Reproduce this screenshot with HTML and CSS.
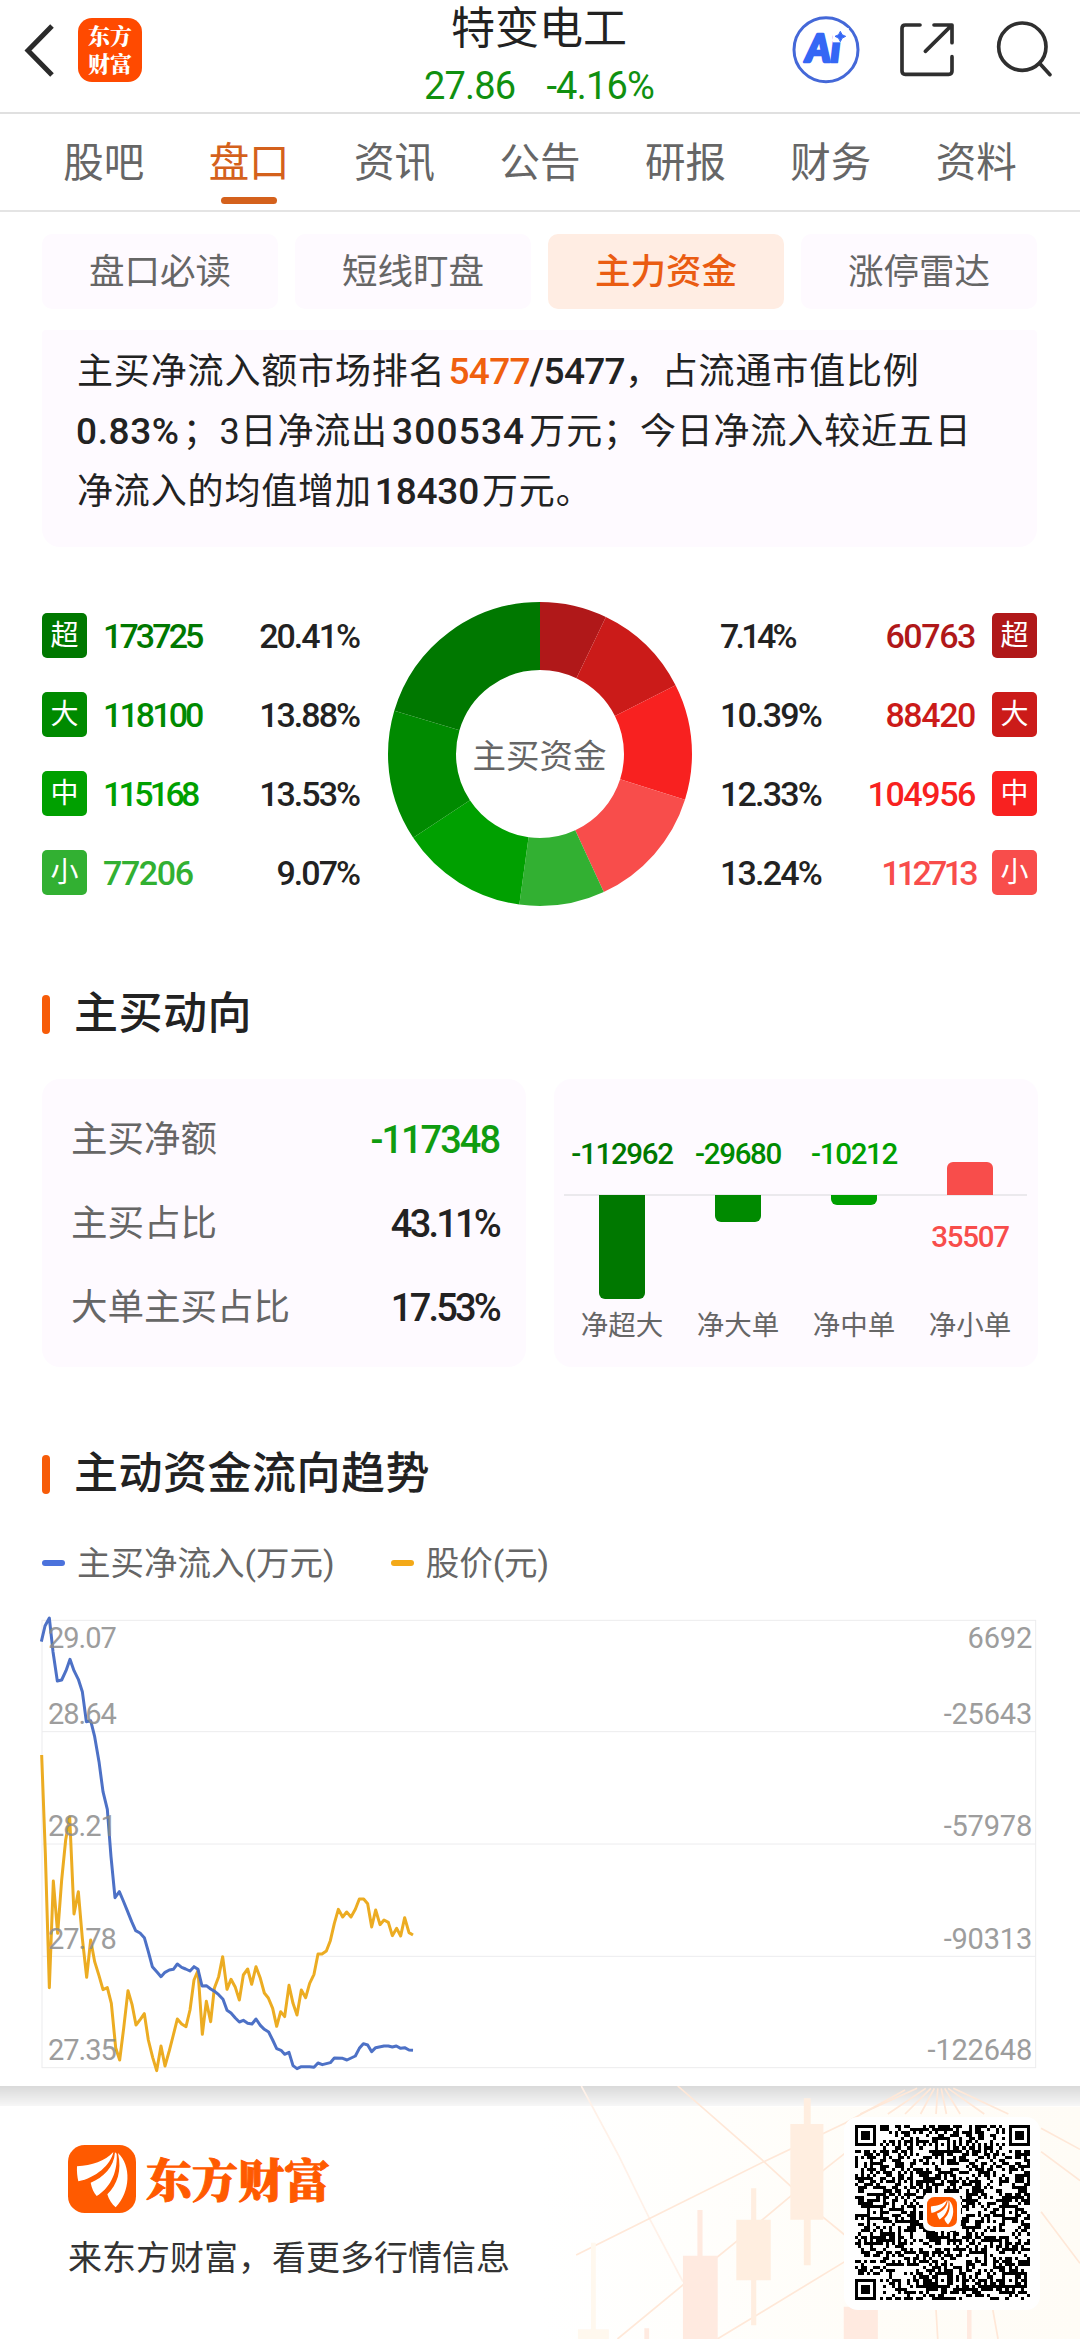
FILE: index.html
```html
<!DOCTYPE html>
<html lang="zh-CN">
<head>
<meta charset="utf-8">
<title>特变电工</title>
<link rel="stylesheet" href="styles.css">
</head>
<body>
<svg class="defs" width="0" height="0" aria-hidden="true">
  <symbol id="brand" viewBox="143 44 204 204">
    <rect x="143" y="44" width="204" height="204" rx="50" fill="#ff5a00"/>
    <g fill="#fff">
      <path d="M170 108C215 105 254 92 279 65C272 103 226 143 174 153C171 140 169 125 170 108Z"/>
      <path d="M284 66C281 112 248 142 211 157C214 174 221 188 229 197C264 176 293 132 289 70Z"/>
      <path d="M293 68C305 122 291 162 261 192C265 208 275 222 286 231C331 184 333 105 293 68Z"/>
    </g>
  </symbol>
</svg>

<header class="header">
  <svg class="back" viewBox="0 0 40 60"><path d="M34 5 10 29.5 34 54" fill="none" stroke="#2b2b2b" stroke-width="5"/></svg>
  <div class="app-badge">东方<br>财富</div>
  <div class="title">
    <h1>特变电工</h1>
    <p><span>27.86</span><span>-4.16%</span></p>
  </div>
  <svg class="tools" viewBox="0 0 870 300">
    <circle cx="138" cy="149" r="96" fill="none" stroke="#4468d8" stroke-width="9"/>
    <text class="ai" x="77" y="185">Ai</text>
    <rect x="158" y="84" width="48" height="43" fill="#fff"/>
    <path d="M181 94Q184 107 197 109Q184 112 181 125Q178 112 165 109Q178 107 181 94Z" fill="#3567f5" stroke="#3567f5" stroke-width="3"/>
    <g fill="none" stroke="#2f2f2f" stroke-width="11" stroke-linecap="round" stroke-linejoin="round">
      <path d="M420 75H376Q366 75 366 85V213Q366 223 376 223H506Q516 223 516 213V170"/>
      <path d="M462 75H516V128M514 77 436 154"/>
      <circle cx="727" cy="140" r="71"/>
      <path d="M780 191 810 224"/>
    </g>
  </svg>
</header>

<nav class="tabs">
  <a>股吧</a><a class="on">盘口</a><a>资讯</a><a>公告</a><a>研报</a><a>财务</a><a>资料</a>
</nav>

<main class="page">
  <div class="pills">
    <span>盘口必读</span><span>短线盯盘</span><span class="on">主力资金</span><span>涨停雷达</span>
  </div>

  <section class="summary">
    <p>主买净流入额市场排名<b class="rank"><span class="hot">5477</span>/5477</b>，占流通市值比例</p>
    <p><b class="ratio">0.83%</b>；3日净流出<b class="sum">300534</b>万元；今日净流入较近五日</p>
    <p>净流入的均值增加<b>18430</b>万元。</p>
  </section>

  <section class="funds">
    <div class="side">
      <div class="fund g1"><i>超</i><b class="tight">173725</b><em>20.41%</em></div>
      <div class="fund g2"><i>大</i><b class="tight">118100</b><em>13.88%</em></div>
      <div class="fund g3"><i>中</i><b class="tighter">115168</b><em>13.53%</em></div>
      <div class="fund g4"><i>小</i><b>77206</b><em>9.07%</em></div>
    </div>
    <div class="donut">
      <svg viewBox="0 0 304 304">
        <g fill="none" stroke-width="68" transform="rotate(-90 152 152)">
          <circle cx="152" cy="152" r="118" pathLength="99.99" stroke="#b01819" stroke-dasharray="7.14 100"/>
          <circle cx="152" cy="152" r="118" pathLength="99.99" stroke="#cb1b19" stroke-dasharray="10.39 100" stroke-dashoffset="-7.14"/>
          <circle cx="152" cy="152" r="118" pathLength="99.99" stroke="#f82120" stroke-dasharray="12.33 100" stroke-dashoffset="-17.53"/>
          <circle cx="152" cy="152" r="118" pathLength="99.99" stroke="#f84d4b" stroke-dasharray="13.24 100" stroke-dashoffset="-29.86"/>
          <circle cx="152" cy="152" r="118" pathLength="99.99" stroke="#32b032" stroke-dasharray="9.07 100" stroke-dashoffset="-43.1"/>
          <circle cx="152" cy="152" r="118" pathLength="99.99" stroke="#00a000" stroke-dasharray="13.53 100" stroke-dashoffset="-52.17"/>
          <circle cx="152" cy="152" r="118" pathLength="99.99" stroke="#008a00" stroke-dasharray="13.88 100" stroke-dashoffset="-65.7"/>
          <circle cx="152" cy="152" r="118" pathLength="99.99" stroke="#007800" stroke-dasharray="20.41 100" stroke-dashoffset="-79.58"/>
        </g>
      </svg>
      <span>主买资金</span>
    </div>
    <div class="side right">
      <div class="fund r1"><em class="tighter">7.14%</em><b>60763</b><i>超</i></div>
      <div class="fund r2"><em>10.39%</em><b>88420</b><i>大</i></div>
      <div class="fund r3"><em>12.33%</em><b>104956</b><i>中</i></div>
      <div class="fund r4"><em>13.24%</em><b class="tighter">112713</b><i>小</i></div>
    </div>
  </section>

  <h2 class="heading">主买动向</h2>
  <section class="cards">
    <div class="card stats">
      <div><span>主买净额</span><b class="down">-117348</b></div>
      <div><span>主买占比</span><b>43.11%</b></div>
      <div><span>大单主买占比</span><b>17.53%</b></div>
    </div>
    <div class="card bars">
      <div class="col g1"><b>-112962</b><i style="height:104px"></i><span>净超大</span></div>
      <div class="col g2"><b>-29680</b><i style="height:27px"></i><span>净大单</span></div>
      <div class="col g3"><b>-10212</b><i style="height:10px"></i><span>净中单</span></div>
      <div class="col r4 up"><i style="height:33px"></i><b>35507</b><span>净小单</span></div>
    </div>
  </section>

  <h2 class="heading second">主动资金流向趋势</h2>
  <div class="legend"><span class="blue">主买净流入(万元)</span><span class="gold">股价(元)</span></div>
  <section class="chart">
    <svg viewBox="39 60 2982 1344">
      <g fill="none" stroke="#ececee" stroke-width="3">
        <rect x="39" y="61" width="2981" height="1342"/>
        <path d="M39 395H3020M39 732H3020M39 1069H3020"/>
      </g>
      <g fill="none" stroke-width="9" stroke-linejoin="round">
        <polyline stroke="#ecac22" points="38,465 49,760 61,1163 73,843 86,1000 98,840 110,720 122,650 135,942 148,875 160,1015 173,1132 185,1020 197,1085 210,1127 222,1169 235,1163 247,1210 260,1343 272,1380 284,1285 297,1172 309,1213 321,1275 334,1258 346,1241 358,1320 371,1372 383,1412 396,1338 408,1398 421,1352 433,1305 445,1257 458,1272 471,1280 483,1230 495,1140 507,1112 520,1303 532,1204 545,1265 556,1165 569,1130 581,1070 594,1168 606,1138 619,1162 631,1200 643,1125 656,1107 668,1153 681,1100 694,1135 706,1179 718,1194 731,1225 743,1279 755,1235 767,1250 780,1156 792,1210 804,1245 817,1170 830,1193 842,1150 855,1123 867,1062 879,1062 892,1053 904,1022 916,970 928,928 941,951 953,936 966,951 979,928 991,897 1004,897 1016,911 1028,981 1040,930 1053,974 1065,960 1078,967 1090,1007 1103,985 1115,1008 1127,953 1140,998 1152,1005"/>
        <polyline stroke="#4d71c6" points="37,125 48,78 61,54 72,155 85,243 98,240 111,212 123,178 135,212 148,238 160,275 172,365 185,362 197,410 210,485 222,575 235,628 246,770 258,893 271,875 283,903 296,935 308,965 320,992 333,999 346,1013 358,1055 370,1100 384,1116 396,1130 408,1117 421,1110 433,1108 445,1092 458,1102 470,1107 483,1113 495,1100 507,1108 519,1158 532,1157 545,1167 557,1174 569,1184 582,1198 594,1231 606,1239 619,1254 631,1266 643,1261 656,1270 669,1272 681,1257 694,1276 706,1288 719,1296 731,1320 743,1346 756,1351 767,1363 780,1357 792,1397 804,1406 817,1400 842,1400 855,1402 867,1389 880,1394 904,1388 916,1374 941,1375 954,1380 979,1368 991,1345 1003,1331 1016,1335 1028,1355 1040,1343 1065,1338 1078,1338 1090,1341 1102,1338 1115,1345 1127,1343 1140,1350 1152,1351"/>
      </g>
    </svg>
    <div class="tick"><span>29.07</span><span>6692</span></div>
    <div class="tick"><span>28.64</span><span>-25643</span></div>
    <div class="tick"><span>28.21</span><span>-57978</span></div>
    <div class="tick"><span>27.78</span><span>-90313</span></div>
    <div class="tick"><span>27.35</span><span>-122648</span></div>
  </section>
</main>

<footer class="footer">
  <svg class="decor" viewBox="0 78 1568 759" preserveAspectRatio="none">
    <defs><linearGradient id="glow" x1="0" x2="1"><stop offset="0" stop-color="#fffdf8" stop-opacity="0"/><stop offset=".6" stop-color="#fffdf8"/><stop offset="1" stop-color="#fffcf6"/></linearGradient></defs>
    <rect x="0" y="140" width="1568" height="700" fill="url(#glow)"/>
    <g fill="none" stroke="#ffe8d8" stroke-width="5">
      <path d="M120 78 230 290 320 480 415 665" stroke="#fff1e8"/>
      <path d="M105 585 650 305 885 190 1060 90M400 78 640 295 735 385M225 837 415 675 570 545 720 415 885 280M515 837 885 605M820 470 885 525"/>
      <path d="M1095 85 930 162M1120 85 1010 162M1135 85 1060 162M1145 85 1105 162M1155 85 1150 162M1165 85 1180 162M1175 85 1220 162M1185 85 1290 162M1200 85 1360 162M1455 205 1568 268M1455 275 1568 362M1455 455 1568 610M1150 750 1155 837M1315 750 1330 837"/>
    </g>
    <g fill="#ffeee0">
      <path d="M766 115h20v77h37v287h-37v137h-20V479h-39V192h39ZM613 385h15v94h42v182h-42v135h-15V661h-43V479h43Z"/>
      <path d="M457 450h15v137h44v250H415V587h42ZM882 740h99v97h-99ZM1240 750h13v87h-13ZM303 805h14v32h-14Z" fill="#ffeae0"/>
      <path d="M148 548h14v260h38v29h-90v-29h38Z" fill="#fff8ee"/>
    </g>
  </svg>
  <div class="promo">
    <div class="brand"><svg><use href="#brand"/></svg><strong>东方财富</strong></div>
    <p>来东方财富，看更多行情信息</p>
  </div>
  <div class="qr">
    <svg id="qr" viewBox="0 0 57 57" shape-rendering="crispEdges"></svg>
    <div class="qr-logo"><svg><use href="#brand"/></svg></div>
  </div>
</footer>
<script src="qr.js"></script>
</body>
</html>
```
FILE: styles.css
```css
* { box-sizing: border-box; margin: 0; padding: 0; }
body {
  width: 1080px; height: 2339px; overflow: hidden;
  display: flex; flex-direction: column;
  background: #fff; color: #222;
  font-family: Roboto, "Noto Sans CJK SC", sans-serif;
}
i, em { font-style: normal; }
b { font-weight: 500; }
.defs { display: block; position: absolute; }

.header { height: 114px; display: flex; align-items: flex-start; border-bottom: 2px solid #e0e0e0; flex: none; }
.back { width: 40px; height: 60px; margin: 21px 0 0 18px; }
.app-badge {
  width: 64px; height: 64px; margin: 18px 0 0 20px; padding: 3px 0;
  border-radius: 14px; background: #ff4a00; color: #fff; text-align: center;
  font: 900 22px/28px "Noto Serif CJK SC", "Noto Sans CJK SC", sans-serif;
}
.title { margin-left: 237px; width: 320px; text-align: center; }
.title h1 { font: 400 44px/50px "Noto Sans CJK SC", sans-serif; }
.title p { display: flex; justify-content: center; gap: 31px; font-size: 38px; line-height: 72px; letter-spacing: -.8px; color: #109010; }
.tools { width: 290px; height: 100px; margin-left: 81px; }
.ai { font: italic 900 114px Lato, sans-serif; fill: #3567f5; stroke: #3567f5; stroke-width: 8px; stroke-linejoin: round; }

.tabs { height: 98px; flex: none; display: flex; padding: 0 31px; border-bottom: 2px solid #e4e4e4; }
.tabs a { flex: 1; display: flex; flex-direction: column; align-items: center; font-size: 40.5px; line-height: 98px; color: #666; }
.tabs .on { color: #d4611c; }
.tabs .on::after { content: ""; width: 56px; height: 7px; margin-top: -15px; border-radius: 4px; background: #d4611c; }

.page { flex: none; height: 1874px; padding: 22px 43px 0 42px; }
.pills { display: flex; gap: 17px; }
.pills span { flex: 1; height: 75px; border-radius: 10px; background: #fefaff; color: #666; text-align: center; font-size: 35.5px; line-height: 77px; }
.pills .on { background: #ffede3; color: #ea5c12; font-weight: 500; }

.summary { height: 217px; margin-top: 21px; padding: 12px 35px; border-radius: 4px 4px 18px 18px; background: #fefaff; font-size: 36px; line-height: 59px; letter-spacing: .85px; white-space: nowrap; }
.summary b { font-size: 37px; letter-spacing: -.2px; margin: 0 3px; }
.summary .rank { letter-spacing: -.7px; margin-right: 0; }
.summary .ratio { letter-spacing: .6px; margin-left: -1px; }
.summary .sum { letter-spacing: 1.2px; margin: 0 4px; }
.summary .hot { color: #f0600f; }

.funds { display: flex; justify-content: space-between; margin-top: 55px; }
.side { width: 317px; display: flex; flex-direction: column; gap: 34px; padding-top: 11px; }
.fund { display: flex; align-items: center; height: 45px; font-size: 34px; letter-spacing: -1.4px; }
.fund i { width: 45px; height: 45px; border-radius: 5px; background: var(--c); color: #fff; font-size: 28px; line-height: 45px; text-align: center; letter-spacing: 0; }
.fund b { flex: 1; padding-left: 16px; color: var(--c); }
.fund em { font-weight: 500; letter-spacing: -2px; }
.right em { letter-spacing: -1.8px; }
.right b { text-align: right; padding: 0 17px 0 0; }
.fund .tight { letter-spacing: -2.9px; }
.fund .tighter { letter-spacing: -3.7px; }
.g1 { --c: #007800; } .g2 { --c: #008a00; } .g3 { --c: #00a000; } .g4 { --c: #32b032; }
.r1 { --c: #b01819; } .r2 { --c: #cb1b19; } .r3 { --c: #f82120; } .r4 { --c: #f84d4b; }
.donut { display: grid; width: 304px; height: 304px; place-items: center; }
.donut > * { grid-area: 1 / 1; }
.donut span { font-size: 33.5px; color: #666; padding-bottom: 2px; }

.heading { display: flex; align-items: center; gap: 24px; height: 60px; margin-top: 79px; font-size: 44px; line-height: 56px; padding-bottom: 2px; font-weight: 500; letter-spacing: .5px; }
.heading::before { content: ""; width: 8px; height: 39px; border-radius: 4px; background: #f75c08; }
.cards { display: flex; gap: 28px; margin-top: 34px; }
.card { flex: none; width: 484px; height: 288px; border-radius: 18px; background: #fefaff; }
.stats { padding: 19px 27px 0 29px; }
.stats div { display: flex; justify-content: space-between; height: 84px; line-height: 84px; font-size: 36.5px; color: #666; }
.stats b { font-size: 38px; color: #222; letter-spacing: -2.8px; }
.stats .down { color: #109c10; letter-spacing: -2px; }
.bars { display: flex; padding: 0 10px; background: linear-gradient(#ebe9ed, #ebe9ed) 10px 115px / 463px 2px no-repeat #fefaff; }
.col { flex: 1; height: 288px; display: grid; grid-template-rows: 58px 58px 105px 50px; justify-items: center; }
.col b { grid-row: 2; line-height: 35px; font-size: 29.5px; letter-spacing: -1.3px; color: var(--c); }
.col i { grid-row: 3; width: 46px; border-radius: 0 0 6px 6px; background: var(--c); }
.col span { grid-row: 4; line-height: 52px; font-size: 27.5px; color: #666; }
.up i { grid-row: 2; align-self: end; border-radius: 6px 6px 0 0; }
.up b { grid-row: 3; padding-top: 25px; }

.second { margin-top: 78px; }
.legend { display: flex; gap: 56px; margin-top: 34px; height: 48px; font-size: 33.5px; line-height: 49px; color: #666; }
.legend span { display: flex; align-items: center; gap: 12px; }
.legend span::before { content: ""; width: 23px; height: 6px; border-radius: 3px; background: #4b72dc; }
.legend .gold::before { background: #f3a918; }
.chart { display: grid; height: 448px; margin-top: 33px; grid-template-rows: 57px 112px 113px 112px 54px; }
.chart svg { grid-area: 1 / 1 / 6 / 2; width: 994px; height: 448px; overflow: visible; }
.tick { grid-column: 1; display: flex; justify-content: space-between; align-items: flex-end; padding: 0 5px 0 6px; font-size: 29px; line-height: 34px; letter-spacing: -.2px; color: #8c8c8c; opacity: .85; }
.tick span:first-child { letter-spacing: -1px; }
.tick:nth-of-type(1) { grid-row: 1; align-self: start; padding-top: 1px; }
.tick:nth-of-type(2) { grid-row: 2; align-self: center; margin-top: -39px; }
.tick:nth-of-type(3) { grid-row: 3; align-self: center; margin-top: -39px; }
.tick:nth-of-type(4) { grid-row: 4; align-self: center; margin-top: -39px; }
.tick:nth-of-type(5) { grid-row: 5; align-self: center; margin-top: 18px; }

.footer { flex: none; height: 253px; position: relative; display: flex; justify-content: space-between; padding: 31px 40px 0 68px; }
.footer::before { content: ""; position: absolute; inset: 0 0 auto; height: 20px; background: linear-gradient(rgba(0,0,0,.15), rgba(0,0,0,.03)); }
.decor { position: absolute; right: 0; top: 0; width: 540px; height: 253px; }
.promo { padding-top: 28px; }
.brand { display: flex; align-items: center; gap: 10px; height: 68px; }
.brand svg { width: 68px; height: 68px; }
.brand strong { font: 900 46px/64px "Noto Serif CJK SC", "Noto Sans CJK SC", sans-serif; color: #ff5a00; -webkit-text-stroke: 1px #ff5a00; padding-bottom: 4px; }
.promo p { margin-top: 21px; font-size: 34px; line-height: 48px; color: #333; }
.qr { position: relative; width: 196px; height: 193px; padding: 8px 0 0 11px; border-radius: 14px; background: #fff; }
#qr { width: 175px; height: 175px; display: block; }
.qr-logo { position: absolute; left: 79px; top: 76px; width: 38px; height: 38px; padding: 4px; border-radius: 7px; background: #fff; }
.qr-logo svg { width: 30px; height: 30px; display: block; }
```
FILE: qr.js
```js
const N = 57;
const finders = [[0, 0], [N - 7, 0], [0, N - 7]];
const aligns = [[28, 6], [6, 28], [50, 28], [28, 50], [50, 50]];
let seed = 20417;
const rand = () => (seed = (seed * 1103515245 + 12345) % 2147483648) / 2147483648;

function dark(x, y) {
  const bit = rand() < 0.5;
  for (const [fx, fy] of finders) {
    const d = Math.max(Math.abs(x - fx - 3), Math.abs(y - fy - 3));
    if (d <= 4) return d !== 4 && d !== 2;
  }
  for (const [ax, ay] of aligns) {
    const d = Math.max(Math.abs(x - ax), Math.abs(y - ay));
    if (d <= 2) return d !== 1;
  }
  if (x === 6 || y === 6) return (x + y) % 2 === 0;
  return bit;
}

let d = '';
for (let y = 0; y < N; y++)
  for (let x = 0; x < N; x++)
    if (dark(x, y)) d += `M${x} ${y}h1v1h-1z`;
const path = document.createElementNS('http://www.w3.org/2000/svg', 'path');
path.setAttribute('d', d);
document.getElementById('qr').appendChild(path);
```
